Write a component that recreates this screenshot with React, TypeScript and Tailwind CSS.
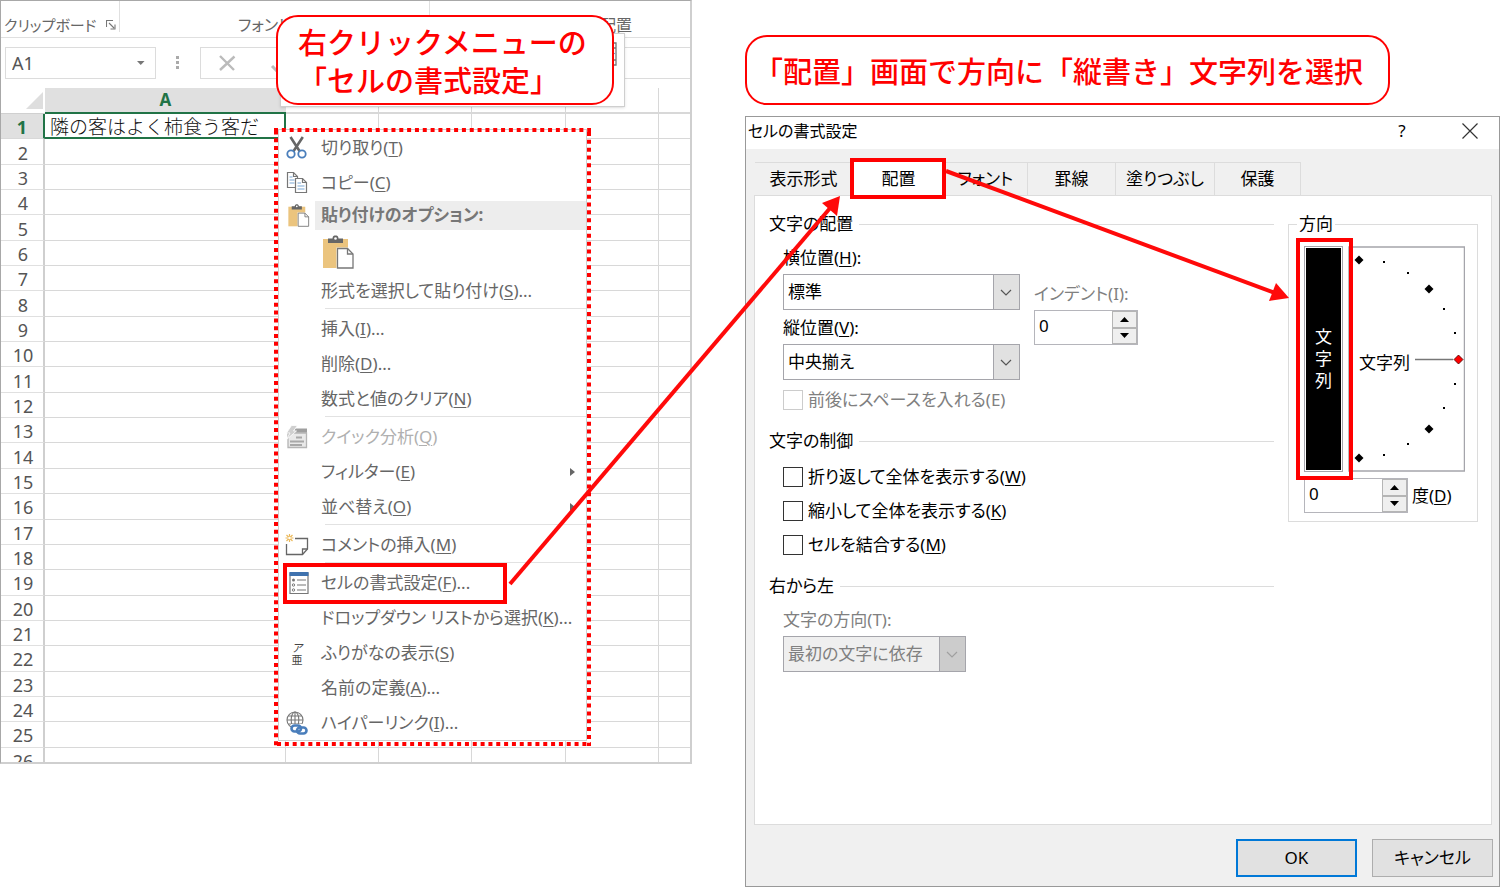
import React from "react";
import type { ReactNode } from "react";

const UI_FONT =
  "font-['Noto_Sans','Noto_Sans_CJK_JP',sans-serif] [font-feature-settings:'palt']";
const CALLOUT =
  "rounded-[22px] border-2 border-[#ff0000] bg-white font-['Noto_Sans_CJK_JP',sans-serif] text-[29px] font-medium leading-[38px] text-[#ff0000] [font-feature-settings:normal]";

function Key({ k }: { k: string }) {
  return (
    <>
      (<span className="underline decoration-1 underline-offset-2">{k}</span>)
    </>
  );
}

/* ---------- icons ---------- */

function CutIcon() {
  return (
    <svg width="22" height="24" viewBox="0 0 22 24" fill="none">
      <path d="M4.500 1L13.800 15.500M16.800 1L7.300 15.500" stroke="#666" strokeWidth="2.600" />
      <circle cx="5" cy="18" r="3.700" fill="#fff" stroke="#4a7ebb" strokeWidth="1.800" />
      <circle cx="16" cy="18" r="3.700" fill="#fff" stroke="#4a7ebb" strokeWidth="1.800" />
    </svg>
  );
}

function CopyIcon() {
  return (
    <svg width="22" height="24" viewBox="0 0 22 24" fill="none" strokeWidth="1.2">
      <path d="M1.5 1.5h6l4 4v11h-10z" fill="#fff" stroke="#777" />
      <path d="M7.5 1.5v4h4" stroke="#777" />
      <path d="M3.5 6h3M3.5 9h5M3.5 12h5" stroke="#7aa7d6" />
      <path d="M9.5 7.5h7l4 4v10h-11z" fill="#fff" stroke="#777" />
      <path d="M16.5 7.5v4h4" stroke="#777" />
      <path d="M11.5 12h3.5M11.5 15h7M11.5 18h7" stroke="#7aa7d6" />
    </svg>
  );
}

function PasteIcon({ size }: { size: number }) {
  return (
    <svg width={size} height={size} viewBox="0 0 32 34" fill="none">
      <path d="M1 4h25v29H1z" fill="#ebc47e" />
      <path d="M6 3.5h4.5C10.500 1 12 .5 13.500 .5s3 .5 3 3H21V8H6z" fill="#666" />
      <circle cx="13.500" cy="3.500" r="1.300" fill="#fff" />
      <path d="M14.500 12.500h11.500l6 6V34H14.500z" fill="#fff" />
      <path d="M15.500 13.500h10l5.500 5.500v14h-15.500z" fill="#fff" stroke="#777" strokeWidth="1.300" />
      <path d="M25.500 13.500v5.500h5.500" stroke="#777" strokeWidth="1.300" />
    </svg>
  );
}

function QuickIcon() {
  return (
    <svg width="22" height="24" viewBox="0 0 22 24" fill="none">
      <path d="M2 8h18.500v14.500H2z" fill="#e9e9e9" stroke="#b5b5b5" strokeWidth="1.300" />
      <path d="M9 3.500h12v4H8z" fill="#9f9f9f" />
      <path d="M4 16.500h14M4 20h12M10 12.500h6" stroke="#a8a8a8" strokeWidth="2" />
      <path d="M5.500 .5h6L7.500 6H10.500L.5 14.500 4 8H.5z" fill="#cfcfcf" stroke="#fff" strokeWidth=".8" />
    </svg>
  );
}

function CommentIcon() {
  return (
    <svg width="24" height="24" viewBox="0 0 24 24" fill="none">
      <path d="M10 5.500h12.500V16l-5 5.500H1.500V11" stroke="#666" strokeWidth="1.300" />
      <path d="M22.500 16h-5v5.500" stroke="#666" strokeWidth="1.300" />
      <path d="M4.500 1v8M.5 5h8M1.500 2l6 6M7.500 2l-6 6" stroke="#ebb95b" strokeWidth="1.200" />
      <circle cx="4.500" cy="5" r="1.300" fill="#fff" />
    </svg>
  );
}

function FormatIcon() {
  return (
    <svg width="20" height="24" viewBox="0 0 20 24" fill="none" className="ml-[3px]">
      <path d="M1 2h18v20.500H1z" fill="#fff" stroke="#777" strokeWidth="1.200" />
      <path d="M.5 1h19v4H.5z" fill="#3f72ae" />
      <circle cx="4.500" cy="9" r="1.500" fill="#777" />
      <circle cx="4.500" cy="14" r="1.200" stroke="#777" />
      <circle cx="4.500" cy="19" r="1.200" stroke="#777" />
      <path d="M8 9h9M8 14h9M8 19h9" stroke="#777" strokeWidth="1.200" />
    </svg>
  );
}

function PhoneticIcon() {
  return (
    <span className="flex flex-col items-center font-['Noto_Sans_CJK_JP',sans-serif] text-[11px] leading-[12px] text-[#444]">
      <span className="italic">ア</span>
      <span>亜</span>
    </span>
  );
}

function LinkIcon() {
  return (
    <svg width="22" height="24" viewBox="0 0 22 24" fill="none">
      <g stroke="#777" strokeWidth="1.100">
        <circle cx="9" cy="9" r="8" />
        <ellipse cx="9" cy="9" rx="3.800" ry="8" />
        <path d="M9 1v16M1 9h16M2.300 5h13.400M2.300 13h13.400" />
      </g>
      <path d="M5 13h17v11H5z" fill="#fff" />
      <g stroke="#4a7ebb" strokeWidth="2.600">
        <rect x="5.500" y="14.500" width="9.500" height="6" rx="3" />
        <rect x="11" y="16.500" width="9.500" height="6" rx="3" />
      </g>
    </svg>
  );
}

/* ---------- context menu ---------- */

function MenuItem({
  icon,
  label,
  k,
  dots,
  disabled,
  arrow,
  marked,
}: {
  icon?: ReactNode;
  label: string;
  k: string;
  dots?: boolean;
  disabled?: boolean;
  arrow?: boolean;
  marked?: boolean;
}) {
  return (
    <li className="relative">
      <button
        type="button"
        disabled={disabled}
        className="flex h-[35px] w-full items-center text-left text-[#666] disabled:text-[#b0b0b0]"
      >
        <span className="flex w-[36px] shrink-0 justify-center">{icon}</span>
        <span className="grow whitespace-nowrap pl-[6px]">
          {label}
          <Key k={k} />
          {dots && "..."}
        </span>
        {arrow && (
          <svg className="mr-[11px]" width="5" height="8" viewBox="0 0 5 8">
            <path d="M0 0l5 4-5 4z" fill="#666" />
          </svg>
        )}
      </button>
      {marked && (
        <span className="pointer-events-none absolute -bottom-[4px] -top-[2px] left-[4px] w-[224px] border-4 border-[#ff0000]" />
      )}
    </li>
  );
}

function Separator() {
  return (
    <li role="separator" className="h-[3px] pl-[46px]">
      <div className="h-px bg-[#e2e2e2]" />
    </li>
  );
}

function ContextMenu() {
  return (
    <div className="absolute left-[274px] top-[128px] w-[317px] px-[4px] pb-[5px] pt-[1px]">
      <ul className="border border-[#cfcfcf] bg-white text-[17px] leading-[24px]">
        <MenuItem icon={<CutIcon />} label="切り取り" k="T" />
        <MenuItem icon={<CopyIcon />} label="コピー" k="C" />
        <li className="flex h-[30px] items-center">
          <span className="flex w-[36px] justify-center pl-[3px]">
            <PasteIcon size={23} />
          </span>
          <span className="flex h-[29px] grow items-center bg-[#ededed] pl-[6px] font-bold text-[#777]">
            貼り付けのオプション:
          </span>
        </li>
        <li className="flex h-[43px] items-center pl-[42px]">
          <button type="button" aria-label="貼り付け">
            <PasteIcon size={34} />
          </button>
        </li>
        <MenuItem label="形式を選択して貼り付け" k="S" dots />
        <Separator />
        <MenuItem label="挿入" k="I" dots />
        <MenuItem label="削除" k="D" dots />
        <MenuItem label="数式と値のクリア" k="N" />
        <Separator />
        <MenuItem icon={<QuickIcon />} label="クイック分析" k="Q" disabled />
        <MenuItem label="フィルター" k="E" arrow />
        <MenuItem label="並べ替え" k="O" arrow />
        <Separator />
        <MenuItem icon={<CommentIcon />} label="コメントの挿入" k="M" />
        <Separator />
        <MenuItem icon={<FormatIcon />} label="セルの書式設定" k="F" dots marked />
        <MenuItem label="ドロップダウン リストから選択" k="K" dots />
        <MenuItem icon={<PhoneticIcon />} label="ふりがなの表示" k="S" />
        <MenuItem label="名前の定義" k="A" dots />
        <MenuItem icon={<LinkIcon />} label="ハイパーリンク" k="I" dots />
      </ul>
      <svg className="pointer-events-none absolute inset-0 h-full w-full">
        <rect
          x="0"
          y="0"
          width="100%"
          height="100%"
          fill="none"
          stroke="#ff0000"
          strokeWidth="8"
          strokeDasharray="4 3.830"
        />
      </svg>
    </div>
  );
}

/* ---------- spreadsheet ---------- */

function Spreadsheet() {
  const rows = Array.from({ length: 26 }, (_, i) => i + 1);
  return (
    <section className="relative w-[46.120%] shrink-0 self-start">
      <div className="overflow-hidden border-b-2 border-l border-r-2 border-t border-[#cfcfcf] border-l-[#a8a8a8] border-t-[#a8a8a8]">
        <div className="relative flex h-[37px] border-b border-[#e0e0e0] text-[16px] leading-[24px] text-[#666]">
          <div className="flex w-[118px] shrink-0 items-center pl-[3px] pt-[12px] text-[15px]">
            <span className="whitespace-nowrap">クリップボード</span>
            <svg className="ml-[9px] shrink-0" width="10" height="10" viewBox="0 0 10 10" fill="none">
              <path d="M.5 7V.5H7M3 3l5 5M9 4.500V9H4.500" stroke="#777" strokeWidth="1.100" />
            </svg>
          </div>
          <div className="h-[31px] w-px shrink-0 bg-[#e0e0e0]" />
          <div className="flex w-[309px] shrink-0 items-center pl-[118px] pt-[12px]">フォント</div>
          <div className="h-[31px] w-px shrink-0 bg-[#e0e0e0]" />
          <div className="flex grow items-center pl-[170px] pt-[12px]">配置</div>
        </div>
        <div className="flex h-[50px] items-start pl-[4px] pt-[9px]">
          <div className="flex h-[32px] w-[151px] items-center border border-[#dcdcdc] pr-[10px]">
            <input
              aria-label="名前ボックス"
              defaultValue="A1"
              className="w-full min-w-0 bg-transparent pl-[6px] text-[18px] text-[#555] outline-none"
            />
            <svg width="8" height="4" viewBox="0 0 8 4">
              <path d="M0 0h8L4 4z" fill="#777" />
            </svg>
          </div>
          <svg className="mx-[20px] mt-[9px]" width="4" height="14" viewBox="0 0 4 14">
            <path d="M0 0h3v3H0zM0 5h3v3H0zM0 10h3v3H0z" fill="#aaa" />
          </svg>
          <div className="flex h-[32px] grow items-center gap-[28px] border-y border-l border-[#dcdcdc] pl-[18px]">
            <svg width="17" height="16" viewBox="0 0 17 16" fill="none">
              <path d="M1 1l14 14M15.500 1.500L1 15" stroke="#bbb" strokeWidth="2.400" />
            </svg>
            <svg width="17" height="16" viewBox="0 0 17 16" fill="none" className="mt-[6px]">
              <path d="M8 8l5 5L17 6" stroke="#bbb" strokeWidth="3" />
            </svg>
          </div>
        </div>
        <div className="h-[674px] overflow-hidden">
          <table className="h-[685px] w-full table-fixed border-separate border-spacing-0">
            <colgroup>
              <col className="w-[44px]" />
              <col className="w-[241px]" />
              <col className="w-[93px]" />
              <col className="w-[93px]" />
              <col className="w-[94px]" />
              <col className="w-[93px]" />
              <col />
            </colgroup>
            <thead>
              <tr className="h-[26px]">
                <th className="border-b border-[#d0d0d0] p-0">
                  <svg className="ml-auto mr-[2px]" width="17" height="17" viewBox="0 0 17 17">
                    <path d="M17 0v17H0z" fill="#dedede" />
                  </svg>
                </th>
                <th className="border-b-2 border-[#217346] bg-[#e0e0e0] p-0 text-[17px] font-bold leading-[22px] text-[#217346]">
                  A
                </th>
                <th className="border-b-2 border-r border-[#d8d8d8] p-0" />
                <th className="border-b-2 border-r border-[#d8d8d8] p-0" />
                <th className="border-b-2 border-r border-[#d8d8d8] p-0" />
                <th className="border-b-2 border-r border-[#d8d8d8] p-0" />
                <th className="border-b-2 border-[#d8d8d8] p-0" />
              </tr>
            </thead>
            <tbody>
              {rows.map((n) => (
                <tr key={n}>
                  {n === 1 ? (
                    <th className="border-b border-r-2 border-b-[#d8d8d8] border-r-[#217346] bg-[#e0e0e0] p-0 pt-[2px] text-[18px] font-bold leading-[22px] text-[#217346]">
                      1
                    </th>
                  ) : (
                    <th className="border-b border-r-2 border-b-[#e0e0e0] border-r-[#cfcfcf] p-0 pl-[2px] pt-[2px] text-[18px] font-normal leading-[22px] text-[#555]">
                      {n}
                    </th>
                  )}
                  {n === 1 ? (
                    <td className="whitespace-nowrap border-b-2 border-r-2 border-[#217346] p-0 pl-[5px] font-['Noto_Sans_CJK_JP',sans-serif] text-[19px] font-light leading-[22px] text-[#111] [font-feature-settings:normal]">
                      隣の客はよく柿食う客だ
                    </td>
                  ) : (
                    <td className="border-b border-r border-[#d8d8d8] p-0" />
                  )}
                  <td className="border-b border-r border-[#d8d8d8] p-0" />
                  <td className="border-b border-r border-[#d8d8d8] p-0" />
                  <td className="border-b border-r border-[#d8d8d8] p-0" />
                  <td className="border-b border-r border-[#d8d8d8] p-0" />
                  <td className="border-b border-[#d8d8d8] p-0" />
                </tr>
              ))}
            </tbody>
          </table>
        </div>
      </div>

      <div className="absolute left-[280px] top-[33px] flex h-[74px] w-[345px] justify-end border border-[#cfcfcf] bg-white pr-[7px] pt-[8px] shadow-sm">
        <svg width="14" height="24" viewBox="0 0 14 24" fill="none">
          <path d="M0 1h13v22H0M0 6h13M0 18h13" stroke="#777" strokeWidth="1.300" />
          <path d="M9 9v5l3-2.500z" fill="#3f72ae" />
        </svg>
      </div>

      <ContextMenu />

      <p className={`absolute left-[276px] top-[15px] w-[338px] whitespace-nowrap py-[5px] pl-[20px] ${CALLOUT}`}>
        右クリックメニューの
        <br />
        「セルの書式設定」
      </p>
    </section>
  );
}

/* ---------- dialog ---------- */

function Heading({ children }: { children: ReactNode }) {
  return (
    <div className="flex h-[24px] items-center gap-[6px]">
      <h3>{children}</h3>
      <div className="h-px grow bg-[#dcdcdc]" />
    </div>
  );
}

function Select({ id, value, disabled }: { id: string; value: string; disabled?: boolean }) {
  return (
    <div className="relative h-[36px]">
      <select
        id={id}
        disabled={disabled}
        className="h-full w-full appearance-none rounded-none border border-[#a5a5ab] bg-white pl-[4px] pr-[28px] text-black opacity-100 disabled:bg-[#efefef] disabled:text-[#808080]"
      >
        <option>{value}</option>
      </select>
      <span
        className={`pointer-events-none absolute inset-y-0 right-0 flex w-[27px] items-center justify-center border border-[#a5a5ab] ${
          disabled ? "bg-[#cccccc]" : "bg-[#e1e1e1]"
        }`}
      >
        <svg width="12" height="7" viewBox="0 0 12 7" fill="none">
          <path d="M1 1l5 5 5-5" stroke={disabled ? "#a0a0a0" : "#555"} strokeWidth="1.200" />
        </svg>
      </span>
    </div>
  );
}

function Spinner({ id }: { id: string }) {
  return (
    <div className="flex h-[35px] w-[104px] border border-[#b5b5bb]">
      <input id={id} defaultValue="0" className="h-[29px] w-full min-w-0 bg-white pl-[4px] text-[17px] outline-none" />
      <div className="flex w-[25px] shrink-0 flex-col">
        <button type="button" aria-label="増やす" className="flex h-1/2 w-full items-center justify-center border border-[#b5b5b5] bg-[#efefef]">
          <svg width="9" height="5" viewBox="0 0 9 5">
            <path d="M4.500 0L9 5H0z" />
          </svg>
        </button>
        <button type="button" aria-label="減らす" className="flex h-1/2 w-full items-center justify-center border border-[#b5b5b5] bg-[#efefef]">
          <svg width="9" height="5" viewBox="0 0 9 5">
            <path d="M0 0h9L4.500 5z" />
          </svg>
        </button>
      </div>
    </div>
  );
}

function Check({ label, k }: { label: string; k: string }) {
  return (
    <label className="flex h-[34px] items-center gap-[5px]">
      <input type="checkbox" className="size-[20px] shrink-0 appearance-none border border-[#333] bg-white" />
      <span>
        {label}
        <Key k={k} />
      </span>
    </label>
  );
}

function Dial() {
  const big = [
    [11, 14],
    [81, 43],
    [81, 183],
    [11, 212],
  ];
  const small = [
    [36, 16],
    [60, 27],
    [96, 63],
    [107, 87],
    [107, 138],
    [96, 162],
    [60, 198],
    [36, 209],
  ];
  return (
    <svg width="117" height="226" viewBox="0 0 117 226" className="shrink-0">
      <rect x="1" y="1" width="115.500" height="224" fill="#fff" stroke="#a5a5ab" strokeWidth="1.500" />
      {big.map(([x, y]) => (
        <path key={`${x}-${y}`} d={`M${x - 4.5} ${y}l4.500-4.500 4.500 4.500-4.500 4.500z`} />
      ))}
      {small.map(([x, y]) => (
        <rect key={`${x}-${y}`} x={x - 1} y={y - 1} width="2" height="2" />
      ))}
      <text x="11" y="123" fontSize="17">
        文字列
      </text>
      <path d="M67 113.500h38" stroke="#777" strokeWidth="1.600" />
      <path d="M106 113.500l4.500-4.500 4.500 4.500-4.500 4.500z" fill="#ff0000" stroke="#400" strokeWidth=".8" />
    </svg>
  );
}

function Tab({ label, className }: { label: string; className: string }) {
  return (
    <button
      type="button"
      role="tab"
      aria-selected={false}
      className={`h-[33px] shrink-0 border-r border-t border-[#dcdcdc] ${className}`}
    >
      {label}
    </button>
  );
}

function FormatDialog() {
  return (
    <div
      role="dialog"
      aria-label="セルの書式設定"
      className="mt-[11px] border border-[#999] bg-[#f0f0f0] text-[17px] leading-[24px] text-black"
    >
      <div className="flex h-[32px] items-center bg-white pb-[4px] pl-[2px]">
        <h2 className="grow text-[16px]">セルの書式設定</h2>
        <button type="button" aria-label="ヘルプ" className="w-[30px] text-[17px]">
          ?
        </button>
        <button type="button" aria-label="閉じる" className="ml-[45px] mr-[21px]">
          <svg width="16" height="16" viewBox="0 0 16 16" fill="none">
            <path d="M.5.5l15 15M15.500.5l-15 15" stroke="#333" strokeWidth="1.200" />
          </svg>
        </button>
      </div>

      <div role="tablist" className="flex pl-[9px] pt-[13px]">
        <Tab label="表示形式" className="w-[98px]" />
        <button
          type="button"
          role="tab"
          aria-selected={true}
          className="relative h-[33px] w-[91px] shrink-0 bg-white"
        >
          配置
          <span className="pointer-events-none absolute -bottom-[4px] -left-[3px] -right-[2px] -top-[4px] z-10 border-4 border-[#ff0000]" />
        </button>
        <Tab label="フォント" className="w-[84px]" />
        <Tab label="罫線" className="w-[88px]" />
        <Tab label="塗りつぶし" className="w-[99px]" />
        <Tab label="保護" className="w-[86px]" />
      </div>

      <div className="ml-[8px] mr-[7px] flex min-h-[630px] items-start gap-[14px] border border-[#dcdcdc] bg-white pl-[14px] pr-[13px] pt-[16px]">
        <div className="min-w-0 grow">
          <Heading>文字の配置</Heading>
          <div className="mt-[10px] flex gap-[14px] pl-[14px]">
            <div className="w-[237px]">
              <label htmlFor="horizontal" className="mb-[4px] block h-[24px]">
                横位置
                <Key k="H" />:
              </label>
              <Select id="horizontal" value="標準" />
              <label htmlFor="vertical" className="mb-[4px] mt-[6px] block h-[24px]">
                縦位置
                <Key k="V" />:
              </label>
              <Select id="vertical" value="中央揃え" />
            </div>
            <div className="pt-[36px]">
              <label htmlFor="indent" className="mb-[4px] block h-[24px] text-[#808080]">
                インデント(I):
              </label>
              <Spinner id="indent" />
            </div>
          </div>
          <label className="mt-[8px] flex h-[24px] items-center gap-[5px] pl-[14px] text-[#808080]">
            <input type="checkbox" disabled className="size-[20px] shrink-0 appearance-none border border-[#ccc] bg-white" />
            <span>前後にスペースを入れる(E)</span>
          </label>

          <div className="mt-[17px]">
            <Heading>文字の制御</Heading>
          </div>
          <div className="mt-[7px] pl-[14px]">
            <Check label="折り返して全体を表示する" k="W" />
            <Check label="縮小して全体を表示する" k="K" />
            <Check label="セルを結合する" k="M" />
          </div>

          <div className="mt-[12px]">
            <Heading>右から左</Heading>
          </div>
          <div className="mt-[10px] w-[197px] pl-[14px]">
            <label htmlFor="direction" className="mb-[4px] block h-[24px] text-[#808080]">
              文字の方向(T):
            </label>
            <Select id="direction" value="最初の文字に依存" disabled />
          </div>
        </div>

        <fieldset className="w-[190px] shrink-0 border border-[#dcdcdc] pb-[8px] pl-[15px]">
          <legend className="-ml-[7px] px-[2px]">方向</legend>
          <div className="mt-[10px] flex gap-[5px]">
            <div className="relative h-[226px] w-[39px] shrink-0 border border-[#a5a5ab] p-px">
              <button
                type="button"
                className="flex h-full w-full flex-col items-center justify-center bg-black leading-[22px] text-white"
              >
                <span>文</span>
                <span>字</span>
                <span>列</span>
              </button>
              <span className="pointer-events-none absolute -bottom-[9px] -left-[9px] -right-[11px] -top-[9px] z-10 border-4 border-[#ff0000]" />
            </div>
            <Dial />
          </div>
          <div className="mt-[6px] flex items-center gap-[4px]">
            <Spinner id="degrees" />
            <label htmlFor="degrees">
              度
              <Key k="D" />
            </label>
          </div>
        </fieldset>
      </div>

      <div className="flex justify-end gap-[15px] pb-[9px] pr-[6px] pt-[14px]">
        <button type="button" className="h-[38px] w-[121px] border-2 border-[#0078d7] bg-[#e1e1e1]">
          OK
        </button>
        <button type="button" className="h-[38px] w-[121px] border border-[#adadad] bg-[#e1e1e1]">
          キャンセル
        </button>
      </div>
    </div>
  );
}

function Arrows() {
  return (
    <svg
      className="pointer-events-none absolute left-0 top-0 z-20 h-[890px] w-full"
      viewBox="0 0 1500 890"
      preserveAspectRatio="none"
    >
      <g stroke="#ff0a0a" strokeWidth="4">
        <path d="M510 584L831 207" />
        <path d="M946 171L1275 293" />
      </g>
      <path d="M840 196L837 216L822 203z" fill="#ff0a0a" />
      <path d="M1289 298L1269 301L1276 283z" fill="#ff0a0a" />
    </svg>
  );
}

export default function App() {
  return (
    <main className={`relative flex min-h-screen items-start justify-between overflow-hidden bg-white ${UI_FONT}`}>
      <Spreadsheet />
      <div className="w-[50.340%] shrink-0 pt-[35px]">
        <p className={`w-fit whitespace-nowrap py-[14px] pl-[7px] pr-[25px] ${CALLOUT}`}>
          「配置」画面で方向に「縦書き」文字列を選択
        </p>
        <FormatDialog />
      </div>
      <Arrows />
    </main>
  );
}
